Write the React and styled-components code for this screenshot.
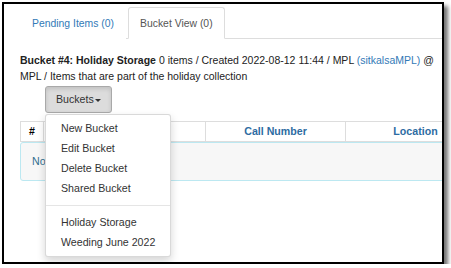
import React from "react";
import styled, { createGlobalStyle } from "styled-components";

const Global = createGlobalStyle`
  html, body { margin: 0; padding: 0; background: #fff; }
  body { font-family: "Liberation Sans", Arial, sans-serif; font-size: 10.64px; color: #333; }
`;

const Frame = styled.div`
  margin: 2px 0 0 2px;
  width: 438px;
  height: 258px;
  border: 2px solid #000;
  box-shadow: 4px 4px 4px rgba(0, 0, 0, 0.55);
  overflow: hidden;
  background: #fff;
`;

const Content = styled.div`
  width: 480px;
  padding: 3px 0 0 16px;
`;

const Tabs = styled.ul`
  display: flex;
  list-style: none;
  margin: 0;
  padding: 0;
  border-bottom: 1px solid #ddd;
`;

const Tab = styled.li`
  margin-right: 2px;
  margin-bottom: -1px;
  padding: 8px 11px 7px;
  line-height: 15.2px;
  font-size: 10.4px;
  border: 1px solid ${(p) => (p.$active ? "#ddd" : "transparent")};
  border-bottom-color: ${(p) => (p.$active ? "#fff" : "transparent")};
  border-radius: 3px 3px 0 0;
  background: #fff;
  color: ${(p) => (p.$active ? "#555" : "#337ab7")};
`;

const Summary = styled.p`
  margin: 13px 0 0 0;
  width: 420px;
  line-height: 16px;
  font-size: 10.5px;
  color: #222;
`;

const Strong = styled.b`
  font-weight: bold;
`;

const Link = styled.span`
  color: #337ab7;
`;

const DropWrap = styled.div`
  position: relative;
  display: inline-block;
  margin: 2px 0 0 25px;
`;

const Button = styled.button`
  font-family: inherit;
  font-size: 10.64px;
  color: #333;
  line-height: 15px;
  padding: 5px 10px 5px 10px;
  background: #dcdcdc;
  border: 1px solid #a9a9a9;
  border-radius: 3px;
  box-shadow: inset 0 2px 4px rgba(0, 0, 0, 0.13);
  display: flex;
  align-items: center;
`;

const Caret = styled.span`
  display: inline-block;
  width: 0;
  height: 0;
  margin-left: 1px;
  margin-top: 1px;
  border-top: 3px solid #333;
  border-left: 3px solid transparent;
  border-right: 3px solid transparent;
`;

const Menu = styled.ul`
  position: absolute;
  top: calc(100% + 1px);
  left: 0;
  z-index: 10;
  width: 124px;
  margin: 0;
  padding: 3.8px 0;
  list-style: none;
  background: #fff;
  border: 1px solid rgba(0, 0, 0, 0.15);
  border-radius: 3px;
  box-shadow: 0 4px 9px rgba(0, 0, 0, 0.17);
`;

const Item = styled.li`
  padding: 2.3px 15px;
  line-height: 15.2px;
  color: #333;
  white-space: nowrap;
`;

const Divider = styled.li`
  height: 1px;
  margin: 6.8px 0;
  background: #e5e5e5;
`;

const HeaderRow = styled.div`
  display: grid;
  grid-template-columns: 24px 162px 140px 140px;
  margin-top: 8px;
`;

const HeadCell = styled.div`
  border: 1px solid #ddd;
  margin-left: ${(p) => (p.$first ? "0" : "-1px")};
  padding: 2px 4px;
  line-height: 15px;
  font-weight: bold;
  text-align: center;
  color: ${(p) => (p.$plain ? "#000" : "#2d6ca2")};
`;

const Alert = styled.div`
  width: 470px;
  padding: 11px 11px;
  line-height: 15px;
  background: #f7f7f7;
  border: 1px solid #bce8f1;
  border-radius: 3px;
  color: #31708f;
`;

export default function App() {
  return (
    <>
      <Global />
      <Frame>
        <Content>
          <Tabs>
            <Tab>Pending Items (0)</Tab>
            <Tab $active>Bucket View (0)</Tab>
          </Tabs>
          <Summary>
            <Strong>Bucket #4: Holiday Storage</Strong> 0 items / Created 2022-08-12 11:44 / MPL{" "}
            <Link>(sitkalsaMPL)</Link> @ MPL / Items that are part of the holiday collection
          </Summary>
          <DropWrap>
            <Button>
              Buckets<Caret />
            </Button>
            <Menu>
              <Item>New Bucket</Item>
              <Item>Edit Bucket</Item>
              <Item>Delete Bucket</Item>
              <Item>Shared Bucket</Item>
              <Divider />
              <Item>Holiday Storage</Item>
              <Item>Weeding June 2022</Item>
            </Menu>
          </DropWrap>
          <HeaderRow>
            <HeadCell $plain $first>#</HeadCell>
            <HeadCell>Barcode</HeadCell>
            <HeadCell>Call Number</HeadCell>
            <HeadCell>Location</HeadCell>
          </HeaderRow>
          <Alert>No items to display</Alert>
        </Content>
      </Frame>
    </>
  );
}
